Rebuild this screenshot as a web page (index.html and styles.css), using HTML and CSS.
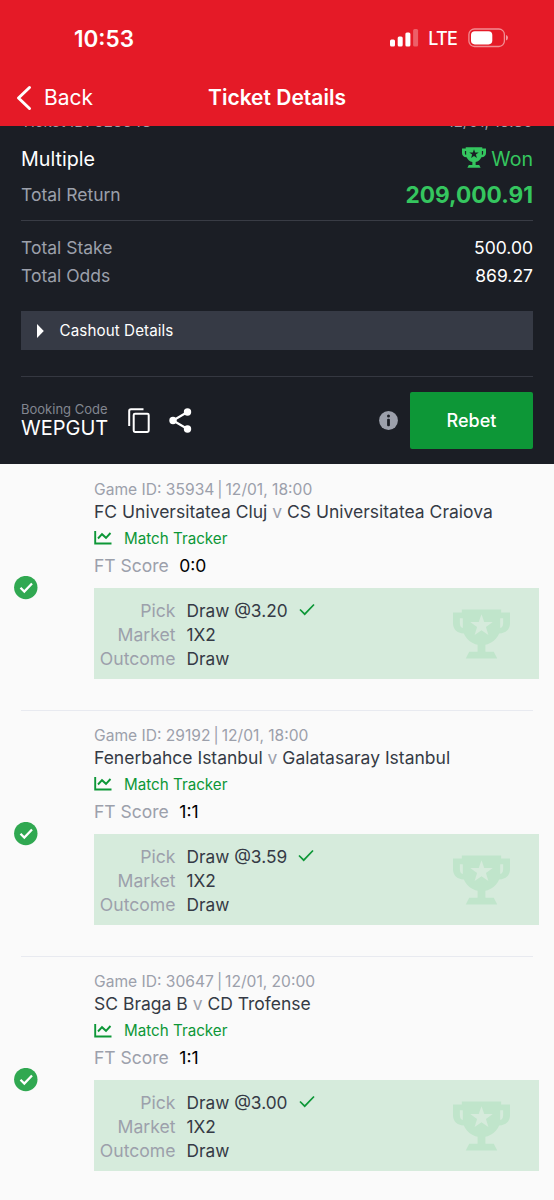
FILE: index.html
```
<!DOCTYPE html>
<html lang="en">
<head>
<meta charset="utf-8">
<title>Ticket Details</title>
<link rel="stylesheet" href="styles.css">
</head>
<body>
<svg class="sprite" aria-hidden="true">
  <symbol id="trophy" viewBox="0 0 58 50"><path fill-rule="evenodd" d="M9 0H49V3H58V14C58 20 54 24 47 24.500C44 31 39 34.500 33 36V43H41.500L45 50H13L16.500 43H25V36C19 34.500 14 31 11 24.500C4 24 0 20 0 14V3H9ZM10 9H7V14C7 17 8 18 10 19ZM48 9V19C50 18 51 17 51 14V9ZM29 5L26.200 12.800H17.500L24.500 17.800L22 26L29 21.300L36 26L33.500 17.800L40.500 12.800H31.800Z"/></symbol>
  <symbol id="chart" viewBox="0 0 18 14"><path d="M1.200 0V12.500H17.500M4 7.500L8 3.200L12 6.800L16.500 2" fill="none" stroke="currentColor" stroke-width="1.900"/></symbol>
  <symbol id="tick" viewBox="0 0 16 13"><path d="M1 6.500L5.700 11.200L15 1.500" fill="none" stroke="currentColor" stroke-width="1.700"/></symbol>
  <symbol id="badge" viewBox="0 0 24 24"><circle cx="11.800" cy="11.600" r="11.700" fill="#30a851"/><path d="M6.500 11.800L10.300 15.500L18 7.500" fill="none" stroke="#fff" stroke-width="2.300"/></symbol>
</svg>
<header class="header">
  <div class="status">
    <span class="time">10:53</span>
    <div class="status-icons">
      <svg width="29" height="18" viewBox="0 0 29 18" fill="#fff"><rect x="0" y="10.500" width="5" height="7" rx="1.500"/><rect x="7.700" y="7.500" width="5" height="10" rx="1.500"/><rect x="15.400" y="3.500" width="5" height="14" rx="1.500"/><rect x="23.100" y="0" width="5" height="17.500" rx="1.500" opacity=".3"/></svg>
      <span class="lte">LTE</span>
      <svg width="41" height="20" viewBox="0 0 41 20"><rect x=".9" y="1" width="35.500" height="17.500" rx="5.500" fill="none" stroke="#fff" stroke-opacity=".5" stroke-width="1.300"/><rect x="3" y="3.200" width="21.300" height="13.200" rx="3.800" fill="#fff"/><path d="M38 7Q40 7.800 40 9.800T38 12.600Z" fill="#fff" opacity=".55"/></svg>
    </div>
  </div>
  <nav class="nav">
    <a class="back"><svg width="16" height="26" viewBox="0 0 16 26"><path d="M13.500 2.500L2.500 13L13.500 23.500" fill="none" stroke="#fff" stroke-width="3" stroke-linecap="round" stroke-linejoin="round"/></svg><span class="back-label">Back</span></a>
    <h1 class="title">Ticket Details</h1>
    <span></span>
  </nav>
</header>
<section class="summary">
  <div class="row row-id"><span>Ticket ID: 828643</span><span>12/01, 16:30</span></div>
  <div class="row row-type"><span class="type">Multiple</span><span class="won"><svg class="won-cup"><use href="#trophy"/></svg><span class="won-label">Won</span></span></div>
  <div class="row row-return"><span class="label return-label">Total Return</span><span class="amount">209,000.91</span></div>
  <div class="totals">
    <div class="row row-total"><span class="label">Total Stake</span><span class="value">500.00</span></div>
    <div class="row row-total"><span class="label">Total Odds</span><span class="value">869.27</span></div>
  </div>
  <div class="cashout"><svg width="7" height="14" viewBox="0 0 7 14"><path d="M0 0L6.800 7L0 14Z" fill="#fff"/></svg><span>Cashout Details</span></div>
  <div class="actions">
    <div class="booking"><span class="booking-label">Booking Code</span><span class="code">WEPGUT</span></div>
    <svg class="copy" width="22" height="25" viewBox="0 0 22 25"><path d="M1.200 18V3Q1.200 1.200 3 1.200H15.500" fill="none" stroke="#fff" stroke-width="2"/><rect x="5.700" y="5.700" width="15" height="18.200" rx="1.300" fill="none" stroke="#fff" stroke-width="2"/></svg>
    <svg class="share" width="23" height="25" viewBox="0 0 23 25"><path d="M18.500 4L4 12.500L18.500 21" fill="none" stroke="#fff" stroke-width="2.200"/><circle cx="18.500" cy="4" r="3.700" fill="#fff"/><circle cx="4" cy="12.500" r="3.700" fill="#fff"/><circle cx="18.500" cy="21" r="3.700" fill="#fff"/></svg>
    <svg class="info" width="19" height="19" viewBox="0 0 19 19"><circle cx="9.500" cy="9.500" r="9.400" fill="#9ca0ab"/><circle cx="9.500" cy="4.900" r="1.500" fill="#1b1e25"/><rect x="8.100" y="7.700" width="2.800" height="7.500" rx="1" fill="#1b1e25"/></svg>
    <button class="rebet">Rebet</button>
  </div>
</section>
<main class="matches">
  <article class="match">
    <svg class="badge"><use href="#badge"/></svg>
    <div class="body">
      <div class="game">Game ID: 35934 <span class="bar">|</span> 12/01, 18:00</div>
      <div class="teams">FC Universitatea Cluj <span class="v">v</span> CS Universitatea Craiova</div>
      <div class="tracker"><svg class="chart"><use href="#chart"/></svg><span>Match Tracker</span></div>
      <div class="score"><span>FT Score</span><span class="result">0:0</span></div>
      <div class="pick">
        <dl class="fields"><dt>Pick</dt><dd>Draw @3.20<svg class="tick"><use href="#tick"/></svg></dd><dt>Market</dt><dd>1X2</dd><dt>Outcome</dt><dd>Draw</dd></dl>
        <svg class="cup"><use href="#trophy"/></svg>
      </div>
    </div>
  </article>
  <article class="match">
    <svg class="badge"><use href="#badge"/></svg>
    <div class="body">
      <div class="game">Game ID: 29192 <span class="bar">|</span> 12/01, 18:00</div>
      <div class="teams">Fenerbahce Istanbul <span class="v">v</span> Galatasaray Istanbul</div>
      <div class="tracker"><svg class="chart"><use href="#chart"/></svg><span>Match Tracker</span></div>
      <div class="score"><span>FT Score</span><span class="result">1:1</span></div>
      <div class="pick">
        <dl class="fields"><dt>Pick</dt><dd>Draw @3.59<svg class="tick"><use href="#tick"/></svg></dd><dt>Market</dt><dd>1X2</dd><dt>Outcome</dt><dd>Draw</dd></dl>
        <svg class="cup"><use href="#trophy"/></svg>
      </div>
    </div>
  </article>
  <article class="match">
    <svg class="badge"><use href="#badge"/></svg>
    <div class="body">
      <div class="game">Game ID: 30647 <span class="bar">|</span> 12/01, 20:00</div>
      <div class="teams">SC Braga B <span class="v">v</span> CD Trofense</div>
      <div class="tracker"><svg class="chart"><use href="#chart"/></svg><span>Match Tracker</span></div>
      <div class="score"><span>FT Score</span><span class="result">1:1</span></div>
      <div class="pick">
        <dl class="fields"><dt>Pick</dt><dd>Draw @3.00<svg class="tick"><use href="#tick"/></svg></dd><dt>Market</dt><dd>1X2</dd><dt>Outcome</dt><dd>Draw</dd></dl>
        <svg class="cup"><use href="#trophy"/></svg>
      </div>
    </div>
  </article>
</main>
</body>
</html>
```
FILE: styles.css
```
* { box-sizing: border-box; }
body { margin: 0; width: 554px; height: 1200px; overflow: hidden; background: #fafafa; font-family: Inter, "Liberation Sans", sans-serif; color: #353a45; }
svg { flex: none; display: block; }
.sprite { display: none; }

.header { height: 126px; background: #e51a27; color: #fff; }
.status { height: 76px; padding: 0 45px 0 74px; display: flex; justify-content: space-between; align-items: center; }
.time { font-size: 22.500px; font-weight: 600; }
.status-icons { display: flex; align-items: center; }
.lte { font-size: 18px; font-weight: 500; letter-spacing: -.8px; margin: 0 11px 0 9px; }
.nav { height: 43px; display: grid; grid-template-columns: 1fr auto 1fr; align-items: center; }
.back { display: flex; align-items: center; padding-left: 16px; gap: 12px; }
.back-label { font-size: 21px; }
.title { margin: 0; font-size: 21px; font-weight: 600; }

.summary { height: 338px; padding: 0 21px; background: #1b1e25; color: #fff; overflow: hidden; }
.row { display: flex; justify-content: space-between; align-items: center; }
.row-id { height: 20px; margin-top: -15px; margin-bottom: 10px; font-size: 15px; letter-spacing: .2px; color: #9ca0ab; }
.row-type { height: 35px; }
.type { font-size: 19.700px; }
.won { display: flex; align-items: center; gap: 5px; color: #35c65f; fill: currentColor; }
.won-cup { width: 24px; height: 21px; margin-top: -2px; }
.won-label { font-size: 19.600px; }
.row-return { height: 36px; }
.label { font-size: 17.500px; color: #9ca0ab; }
.amount { font-size: 22.700px; font-weight: 700; color: #35c65f; }
.totals { margin-top: 8px; padding-top: 12px; border-top: 1px solid #393c45; }
.row-total { height: 28px; }
.value { font-size: 17.500px; }
.cashout { margin-top: 22px; height: 39px; padding-left: 16px; background: #363a45; display: flex; align-items: center; gap: 15.500px; font-size: 15.200px; letter-spacing: .08px; }
.actions { margin-top: 26px; height: 88px; border-top: 1px solid #353841; display: flex; align-items: center; }
.booking { width: 107px; padding-bottom: 2px; display: flex; flex-direction: column; }
.booking-label { font-size: 13px; line-height: 18px; color: #828690; }
.code { font-size: 20px; line-height: 21px; white-space: nowrap; }
.copy { margin-right: 19px; }
.info { margin-left: auto; margin-right: 12px; }
.rebet { width: 123px; height: 57px; padding: 0; border: 0; border-radius: 2px; background: #0d9737; color: #fff; font: 500 18px Inter, sans-serif; }

.matches { padding-top: 1px; }
.match { height: 246px; margin: 0 21px; border-bottom: 1px solid #e8eaf0; display: flex; align-items: center; }
.match:last-child { border-bottom: 0; }
.badge { width: 24px; height: 24px; margin-left: -7px; }
.body { width: 445px; height: 246px; padding-top: 15px; margin-left: 56px; margin-right: -6px; flex: none; white-space: nowrap; }
.game { font-size: 15.600px; line-height: 20px; color: #9ca0ab; }
.bar { margin: 0 -1.400px; }
.teams { font-size: 17.500px; line-height: 23px; }
.v { color: #9ca0ab; }
.tracker { margin-top: 4px; height: 23px; display: flex; align-items: center; gap: 12px; font-size: 15.200px; color: #0d9737; }
.chart { width: 18px; height: 14px; }
.score { margin-top: 4px; height: 23px; display: flex; align-items: center; gap: 10.500px; font-size: 17.500px; color: #9ca0ab; }
.result { color: #000; }
.pick { margin-top: 11px; height: 91px; padding: 11px 29px 0 0; background: #d6ebdc; display: flex; justify-content: space-between; }
.fields { margin: 0; display: grid; grid-template-columns: 81.500px auto; column-gap: 11px; grid-auto-rows: 24px; line-height: 24px; font-size: 17.300px; }
.fields dt { text-align: right; color: #9ca0ab; font-size: 17.600px; }
.fields dd { margin: 0; display: flex; align-items: center; gap: 11px; }
.tick { width: 16px; height: 13px; margin-top: -3px; color: #0d9737; }
.cup { width: 57px; height: 50px; margin-top: 10px; fill: #c0e5cb; }
```
